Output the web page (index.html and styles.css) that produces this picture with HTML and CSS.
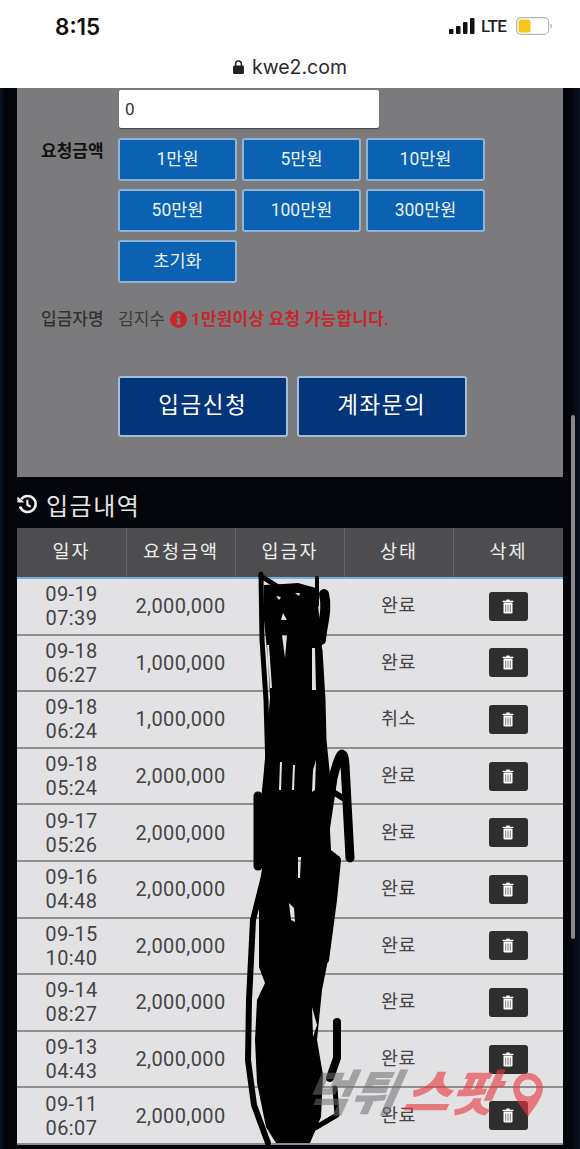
FILE: index.html
```html
<!DOCTYPE html>
<html lang="ko">
<head>
  <meta charset="UTF-8">
  <meta name="viewport" content="width=device-width, initial-scale=1.0">
  <title>kwe2.com</title>
  <link rel="stylesheet" href="styles.css">
</head>
<body>
  <svg class="defs" width="0" height="0">
    <symbol id="trash" viewBox="0 0 12 15">
      <path d="M4 1.8 4.6.6h2.8L8 1.8h3.4v1.3H.6V1.8z" fill="#fff"/>
      <path d="M1.5 3.6h9v9.6q0 1.3-1.3 1.3H2.8q-1.3 0-1.3-1.3z" fill="#fff"/>
      <path d="M3.2 5.4h1v7.4h-1zM5.5 5.4h1v7.4h-1zM7.8 5.4h1v7.4h-1z" fill="#777"/>
    </symbol>
  </svg>

  <header class="topbar">
    <div class="status-bar">
      <span class="clock">8:15</span>
      <div class="status-icons">
        <svg class="signal" width="26" height="16" viewBox="0 0 26 16">
          <rect x="0" y="11" width="4.5" height="5" rx="1"/>
          <rect x="7" y="8" width="4.5" height="8" rx="1"/>
          <rect x="14" y="4" width="4.5" height="12" rx="1"/>
          <rect x="21" y="0" width="4.5" height="16" rx="1"/>
        </svg>
        <span class="lte">LTE</span>
        <svg class="battery" width="36" height="18" viewBox="0 0 36 18">
          <rect x=".6" y=".6" width="32" height="16.8" rx="4.5" fill="none" stroke="#b5b5b5" stroke-width="1.2"/>
          <rect x="2.5" y="2.5" width="12" height="13" rx="2.5" fill="#f5c518"/>
          <path d="M34.5 6.5q1.5.8 1.5 2.5t-1.5 2.5z" fill="#b5b5b5"/>
        </svg>
      </div>
    </div>
    <div class="url-bar">
      <svg width="11" height="14" viewBox="0 0 11 14">
        <path d="M2.6 6V4a2.9 2.9 0 0 1 5.8 0v2" fill="none" stroke="#222" stroke-width="1.5"/>
        <rect x="0" y="5.6" width="11" height="8.4" rx="1.6" fill="#222"/>
      </svg>
      <span>kwe2.com</span>
    </div>
  </header>

  <main class="content">
    <section class="panel">
      <div class="form-row amount-input">
        <div class="form-label"></div>
        <input class="amount" type="text" value="0">
      </div>
      <div class="form-row">
        <div class="form-label strong">요청금액</div>
        <div class="amount-btns">
          <button class="amount-btn">1만원</button>
          <button class="amount-btn">5만원</button>
          <button class="amount-btn">10만원</button>
          <button class="amount-btn">50만원</button>
          <button class="amount-btn">100만원</button>
          <button class="amount-btn">300만원</button>
          <button class="amount-btn">초기화</button>
        </div>
      </div>
      <div class="form-row name-row">
        <div class="form-label medium">입금자명</div>
        <div class="name-value">
          <span>김지수</span>
          <svg width="17" height="17" viewBox="0 0 17 17">
            <circle cx="8.5" cy="8.5" r="8.5" fill="#c8262c"/>
            <rect x="7" y="3" width="3" height="2.6" fill="#7b7a7c"/>
            <path d="M6.3 7h3.6v5h1v1.6H6.3V12h1V8.6h-1z" fill="#7b7a7c"/>
          </svg>
          <span class="warn">1만원이상 요청 가능합니다.</span>
        </div>
      </div>
      <div class="form-actions">
        <button class="action-btn">입금신청</button>
        <button class="action-btn">계좌문의</button>
      </div>
    </section>

    <h2 class="history-title">
      <svg width="20" height="20" viewBox="0 0 20 20">
        <path d="M4.2 5.2A8 8 0 1 1 3 12.5" fill="none" stroke="#eee" stroke-width="2.6"/>
        <path d="M.4 2.6 7.6 8.6H.4z" fill="#eee"/>
        <path d="M10.4 5.8v5l3.2 2" fill="none" stroke="#eee" stroke-width="2.2"/>
      </svg>
      입금내역
    </h2>

    <div class="history">
      <div class="history-head">
        <div>일자</div>
        <div>요청금액</div>
        <div>입금자</div>
        <div>상태</div>
        <div>삭제</div>
      </div>
      <div class="history-row">
        <div>09-19<br>07:39</div><div>2,000,000</div><div></div><div class="state">완료</div>
        <div><button class="del-btn"><svg width="12" height="15"><use href="#trash"/></svg></button></div>
      </div>
      <div class="history-row">
        <div>09-18<br>06:27</div><div>1,000,000</div><div></div><div class="state">완료</div>
        <div><button class="del-btn"><svg width="12" height="15"><use href="#trash"/></svg></button></div>
      </div>
      <div class="history-row">
        <div>09-18<br>06:24</div><div>1,000,000</div><div></div><div class="state">취소</div>
        <div><button class="del-btn"><svg width="12" height="15"><use href="#trash"/></svg></button></div>
      </div>
      <div class="history-row">
        <div>09-18<br>05:24</div><div>2,000,000</div><div></div><div class="state">완료</div>
        <div><button class="del-btn"><svg width="12" height="15"><use href="#trash"/></svg></button></div>
      </div>
      <div class="history-row">
        <div>09-17<br>05:26</div><div>2,000,000</div><div></div><div class="state">완료</div>
        <div><button class="del-btn"><svg width="12" height="15"><use href="#trash"/></svg></button></div>
      </div>
      <div class="history-row">
        <div>09-16<br>04:48</div><div>2,000,000</div><div></div><div class="state">완료</div>
        <div><button class="del-btn"><svg width="12" height="15"><use href="#trash"/></svg></button></div>
      </div>
      <div class="history-row">
        <div>09-15<br>10:40</div><div>2,000,000</div><div></div><div class="state">완료</div>
        <div><button class="del-btn"><svg width="12" height="15"><use href="#trash"/></svg></button></div>
      </div>
      <div class="history-row">
        <div>09-14<br>08:27</div><div>2,000,000</div><div></div><div class="state">완료</div>
        <div><button class="del-btn"><svg width="12" height="15"><use href="#trash"/></svg></button></div>
      </div>
      <div class="history-row">
        <div>09-13<br>04:43</div><div>2,000,000</div><div></div><div class="state">완료</div>
        <div><button class="del-btn"><svg width="12" height="15"><use href="#trash"/></svg></button></div>
      </div>
      <div class="history-row">
        <div>09-11<br>06:07</div><div>2,000,000</div><div></div><div class="state">완료</div>
        <div><button class="del-btn"><svg width="12" height="15"><use href="#trash"/></svg></button></div>
      </div>
    </div>
  </main>

  <div class="scrollbar"></div>

  <!-- hand drawn cover over the depositor column -->
  <svg class="scribble" width="580" height="1149" viewBox="0 0 580 1149">
    <path fill-rule="evenodd" d="M264 585Q285 584 298 583L316 588 322 640 321 690 324 720 327 770 331 850 340 857 337 885 330 950 322 990 317 1040 323 1075 321 1117 310 1143H276L266 1127 257 1083 255 1040 257 1000 265 983 259 967 259 900 262 867 258 830 264 770 270 698 268 660 264 620Z
      M282 635 287 635 285 658ZM289 903 294 908 295 922 291 920ZM298 857H301L300 878H298ZM312 1007 317 1025 313 1037ZM276 596 281 597 279 600ZM295 593 300 593 299 596ZM283 613 287 620 281 620ZM312 648 315 648 316 690 312 690ZM267 645 269 645 272 688 270 688ZM280 762 282 762 281 790 279 790ZM293 765 295 765 294 790 292 790ZM313 770 316 760 315 790 312 792Z"/>
    <g fill="none" stroke="#000" stroke-linecap="round" stroke-linejoin="round">
      <path stroke-width="5" d="M261 574 262 640 266 700 268 770"/>
      <path stroke-width="5" d="M264 578 280 588"/>
      <path stroke-width="4" d="M317 578V605"/>
      <path stroke-width="10" d="M324 594C328 610 322 625 321 640"/>
      <path stroke-width="5" d="M320 650 323 700 324 740 328 780 329 810"/>
      <path stroke-width="9" d="M324 838 333 778Q343 738 345 765L350 858"/>
      <path stroke-width="6" d="M330 790 346 800"/>
      <path stroke-width="9" d="M258 796 258 866"/>
      <path stroke-width="6" d="M268 860 253 920 249 1000 248 1060 254 1105 268 1143"/>
      <path stroke-width="8" d="M337 1022 337 1058 330 1078"/>
      <path stroke-width="5" d="M335 1088 337 1115 315 1128 296 1136"/>
      <path stroke-width="6" d="M338 860 334 900 326 960"/>
    </g>
  </svg>

  <!-- site watermark -->
  <div class="watermark">
    <span class="wm-gray">먹튀</span><span class="wm-red">스팟</span>
    <svg class="wm-pin" width="30" height="44" viewBox="0 0 30 44">
      <path fill-rule="evenodd" d="M15 0A15 15 0 0 1 30 15C30 25 20 36 15 44 10 36 0 25 0 15A15 15 0 0 1 15 0ZM15 6.500A8.500 8.500 0 1 0 15 23.500 8.500 8.500 0 0 0 15 6.500Z" fill="#e8383f" fill-opacity=".62"/>
    </svg>
  </div>
</body>
</html>
```

FILE: styles.css
```css
* {
  box-sizing: border-box;
}

body {
  margin: 0;
  width: 580px;
  height: 1149px;
  overflow: hidden;
  position: relative;
  font-family: Roboto, "Noto Sans CJK KR", sans-serif;
  background-color: #04050b;
  background-image: linear-gradient(90deg, #0c1526 0, #04050b 5px, #04050b 572px, #0b1220 580px);
}

.defs {
  position: absolute;
}

button {
  font-family: inherit;
  cursor: pointer;
}

/* phone top */
.topbar {
  height: 88px;
  background-color: #fff;
  color: #222;
}

.status-bar {
  height: 50px;
  padding: 2px 28px 0 55px;
  display: flex;
  align-items: center;
  justify-content: space-between;
}

.clock {
  font-family: Inter, sans-serif;
  font-size: 22.500px;
  font-weight: 600;
  color: #111;
}

.status-icons {
  display: flex;
  align-items: center;
  gap: 6px;
}

.signal {
  fill: #111;
}

.lte {
  font-size: 17px;
  font-weight: 500;
  color: #222;
  width: 27px;
  letter-spacing: -.6px;
}

.battery {
  margin-left: 2px;
}

.url-bar {
  height: 34px;
  display: flex;
  align-items: center;
  justify-content: center;
  gap: 8px;
  font-family: Inter, sans-serif;
  font-size: 19.500px;
  color: #2a2a2a;
}

/* deposit form */
.content {
  padding: 0 17px;
}

.panel {
  height: 389px;
  padding-top: 2px;
  background-color: #7b7a7c;
}

.form-row {
  display: flex;
}

.form-label {
  width: 101px;
  flex: none;
  padding-left: 24px;
  font-size: 17px;
  line-height: 24px;
  color: #333;
}

.form-label.strong {
  font-weight: 700;
  color: #111;
  padding-top: 1px;
}

.form-label.medium {
  font-weight: 500;
}

.amount {
  width: 260px;
  height: 38px;
  margin-left: 1px;
  padding: 0 6px;
  border: none;
  border-radius: 2px;
  background-color: #fff;
  font-family: inherit;
  font-size: 17px;
  color: #333;
  box-shadow: 0 1px 1px #444;
}

.amount-input {
  margin-bottom: 10px;
}

.amount-btns {
  display: grid;
  grid-template-columns: repeat(3, 119px);
  grid-auto-rows: 43px;
  column-gap: 5px;
  row-gap: 8px;
}

.amount-btn {
  border: 2px solid #8eb5d9;
  border-radius: 3px;
  background-color: #0b61b2;
  color: #e9f1fa;
  font-size: 17.500px;
  padding: 0 0 4px;
}

.name-row {
  margin-top: 24px;
  align-items: center;
}

.name-value {
  display: flex;
  align-items: center;
  gap: 5px;
  font-size: 17px;
  line-height: 24px;
  color: #3a3a3a;
}

.warn {
  margin-left: -1px;
  font-size: 17px;
  letter-spacing: .2px;
  font-weight: 700;
  color: #c8262c;
}

.form-actions {
  display: flex;
  gap: 9.500px;
  margin-top: 45px;
  padding-left: 101px;
}

.action-btn {
  width: 169.500px;
  height: 61px;
  border: 2px solid #a6bcd9;
  border-radius: 3px;
  background-color: #04357a;
  color: #fff;
  font-size: 22.500px;
  font-weight: 400;
  letter-spacing: 1.500px;
  padding: 0 0 8px;
}

/* history table */
.history-title {
  display: flex;
  align-items: center;
  gap: 9px;
  height: 51px;
  margin: 0;
  padding-top: 3px;
  font-size: 24px;
  font-weight: 400;
  letter-spacing: 1.500px;
  color: #e4e4e4;
}

.history-head,
.history-row {
  display: grid;
  grid-template-columns: repeat(4, 109px) 1fr;
  text-align: center;
}

.history-head {
  height: 51px;
  background-color: #4d4d4f;
  border-bottom: 2px solid #6fb2e2;
  color: #eee;
  font-size: 18.500px;
  letter-spacing: 2px;
  line-height: 48px;
}

.history-head div + div {
  border-left: 1px solid #656567;
}

.history-row {
  height: 56.600px;
  align-items: center;
  background-color: #e2e1e3;
  border-bottom: 2px solid #8e8e8e;
  color: #444;
  font-size: 20px;
  letter-spacing: .4px;
  line-height: 24px;
}

.state {
  font-size: 18.500px;
}

.del-btn {
  width: 39px;
  height: 29px;
  padding: 0;
  border: none;
  border-radius: 3px;
  background-color: #2e2e2e;
  display: inline-flex;
  align-items: center;
  justify-content: center;
  vertical-align: middle;
}

/* over the page */
.scrollbar {
  position: absolute;
  left: 571px;
  top: 415px;
  width: 4px;
  height: 524px;
  border-radius: 2px;
  background-color: #88888c;
}

.scribble {
  position: absolute;
  left: 0;
  top: 0;
  pointer-events: none;
}

.watermark {
  position: absolute;
  left: 309px;
  top: 1066px;
  width: 236px;
  height: 56px;
  display: flex;
  pointer-events: none;
  font-size: 56px;
  line-height: 56px;
  font-weight: 900;
}

.wm-gray,
.wm-red {
  display: block;
  width: 97px;
  white-space: nowrap;
  transform: skewX(-24deg) scaleY(.88) scaleX(.9);
  transform-origin: left center;
}

.wm-gray {
  color: rgba(110, 110, 112, .55);
  margin-right: 3px;
}

.wm-red {
  color: rgba(232, 56, 63, .62);
}

.wm-pin {
  position: absolute;
  left: 204px;
  top: 7px;
}
```
